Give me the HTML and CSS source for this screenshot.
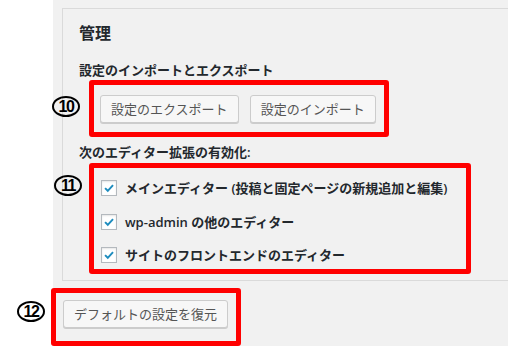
FILE: index.html
```html
<!DOCTYPE html>
<html lang="ja">
<head>
    <meta charset="UTF-8">
    <title>管理</title>
    <link rel="stylesheet" href="styles.css">
</head>
<body>
    <div class="page">
        <div class="sidebar"></div>
        <main class="content">
            <section class="panel">
                <h2 class="panel-title">管理</h2>
                <p class="field-label">設定のインポートとエクスポート</p>
                <div class="actions">
                    <button class="button">設定のエクスポート</button>
                    <button class="button">設定のインポート</button>
                </div>
                <p class="field-label">次のエディター拡張の有効化:</p>
                <ul class="options">
                    <li class="option"><span class="check"><svg viewBox="0 0 16 16"><path d="M3.5 8.2 L6.6 11.2 L12.6 4.6"/></svg></span>メインエディター (投稿と固定ページの新規追加と編集)</li>
                    <li class="option"><span class="check"><svg viewBox="0 0 16 16"><path d="M3.5 8.2 L6.6 11.2 L12.6 4.6"/></svg></span>wp-admin の他のエディター</li>
                    <li class="option"><span class="check"><svg viewBox="0 0 16 16"><path d="M3.5 8.2 L6.6 11.2 L12.6 4.6"/></svg></span>サイトのフロントエンドのエディター</li>
                </ul>
            </section>
            <div class="reset">
                <button class="button">デフォルトの設定を復元</button>
            </div>
        </main>

        <!-- annotations -->
        <div class="frame frame-10"></div>
        <div class="frame frame-11"></div>
        <div class="frame frame-12"></div>
        <span class="mark mark-10">10</span>
        <span class="mark mark-11">11</span>
        <span class="mark mark-12">12</span>
    </div>
</body>
</html>
```

FILE: styles.css
```css
body {
    margin: 0;
    background-color: #fff;
    font-family: "Open Sans", "Noto Sans CJK JP", sans-serif;
    color: #23282d;
}
.page {
    position: relative;
    display: flex;
    width: 508px;
    height: 346px;
    overflow: hidden;
}
.sidebar {
    width: 53px;
    flex-shrink: 0;
    background-color: #fff;
}
.content {
    flex: 1;
    background-color: #f1f1f1;
    padding-top: 8px;
    padding-left: 9px;
}
.panel {
    border-top: 1px solid #dadada;
    border-left: 1px solid #dadada;
    border-bottom: 1px solid #dadada;
    padding: 14px 0 15px 16px;
}
.panel-title {
    margin: 0;
    font-size: 16px;
    line-height: 20px;
    font-weight: 700;
}
.field-label {
    margin: 17px 0 0;
    font-size: 13px;
    line-height: 20px;
    font-weight: 600;
}
.actions {
    display: flex;
    gap: 11px;
    margin: 15px 0 0 21px;
}
.button {
    height: 28px;
    padding: 0 10px;
    background-color: #f7f7f7;
    border: 1px solid #ccc;
    border-radius: 3px;
    box-shadow: 0 1px 0 #ccc;
    color: #555;
    font-family: "Open Sans", "Noto Sans CJK JP", sans-serif;
    font-size: 13px;
    line-height: 26px;
    cursor: pointer;
}
.actions + .field-label {
    margin-top: 19px;
}
.options {
    list-style: none;
    margin: 16px 0 0 22px;
    padding: 0;
    display: flex;
    flex-direction: column;
    gap: 13.5px;
}
.option {
    display: flex;
    align-items: center;
    gap: 8px;
    font-size: 13px;
    line-height: 20px;
    font-weight: 600;
}
.check {
    width: 14px;
    height: 14px;
    flex-shrink: 0;
    background-color: #fff;
    border: 1px solid #b4b9be;
    box-shadow: inset 0 1px 2px rgba(0, 0, 0, 0.1);
}
.check svg {
    display: block;
    width: 14px;
    height: 14px;
}
.check path {
    fill: none;
    stroke: #1e8cbe;
    stroke-width: 2.2;
}
.reset {
    margin: 19px 0 0 1px;
}

/* annotations */
.frame {
    position: absolute;
    border: 5px solid #f00;
    border-radius: 3px;
}
.frame-10 {
    left: 89px;
    top: 80px;
    width: 290px;
    height: 47px;
}
.frame-11 {
    left: 89px;
    top: 163px;
    width: 372px;
    height: 101px;
}
.frame-12 {
    left: 51px;
    top: 288px;
    width: 180px;
    height: 48px;
}
.mark {
    position: absolute;
    box-sizing: border-box;
    width: 28px;
    height: 21px;
    border: 2px solid #000;
    border-radius: 50%;
    font-family: "Liberation Sans", sans-serif;
    font-size: 16px;
    font-weight: 700;
    line-height: 17px;
    letter-spacing: -1.5px;
    text-align: center;
    color: #000;
}
.mark-10 {
    left: 52px;
    top: 96px;
}
.mark-11 {
    left: 54px;
    top: 175px;
}
.mark-12 {
    left: 17px;
    top: 301px;
}
```
